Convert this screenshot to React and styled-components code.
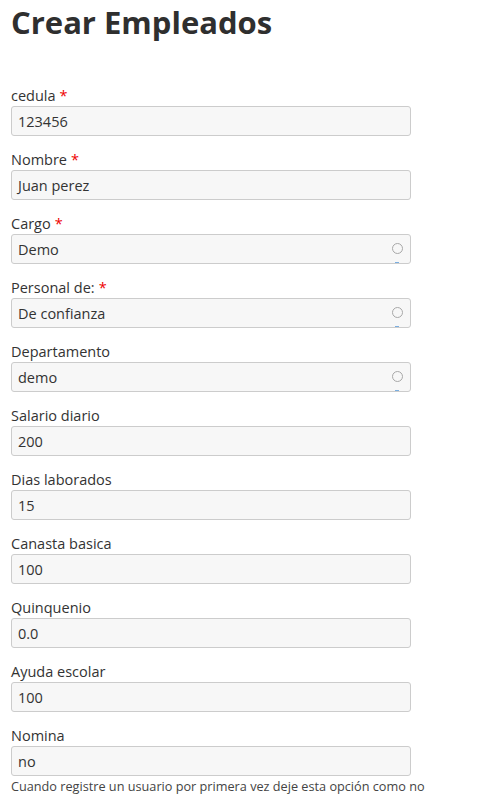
import React from "react";
import styled, { createGlobalStyle } from "styled-components";

const Global = createGlobalStyle`
  html, body { margin: 0; padding: 0; background: #fff; }
  body { font-family: "Open Sans", Lato, sans-serif; color: #333; }
`;

const Page = styled.div`
  padding: 0 11px;
  width: 400px;
`;

const Title = styled.h1`
  margin: 0;
  padding-top: 2px;
  font-size: 31px;
  line-height: 40px;
  font-weight: 700;
  color: #2f2f2f;
  height: 84px;
`;

const Group = styled.div`
  margin-bottom: 14px;
  position: relative;
`;

const Label = styled.label`
  display: block;
  font-size: 14.5px;
  line-height: 20px;
  color: #333;
`;

const Req = styled.span`
  color: #e00;
  margin-left: 4px;
`;

const Field = styled.div`
  box-sizing: border-box;
  height: 30px;
  width: 400px;
  border: 1px solid #ccc;
  border-radius: 3px;
  background: #f7f7f7;
  display: flex;
  align-items: center;
  padding: 0 6px;
  font-size: 14.5px;
  color: #333;
  position: relative;
`;

const Ring = styled.span`
  box-sizing: border-box;
  position: absolute;
  right: 7px;
  top: 8px;
  width: 11px;
  height: 11px;
  border: 1.8px solid #a8a8a8;
  border-radius: 50%;
`;

const Dash = styled.span`
  position: absolute;
  right: 11px;
  bottom: 0;
  width: 4px;
  height: 1px;
  background: #7aaee0;
`;

const Help = styled.div`
  font-size: 12.7px;
  line-height: 16px;
  color: #444;
  margin-top: 2px;
  white-space: nowrap;
`;

const fields = [
  { label: "cedula", req: true, value: "123456" },
  { label: "Nombre", req: true, value: "Juan perez" },
  { label: "Cargo", req: true, value: "Demo", select: true },
  { label: "Personal de:", req: true, value: "De confianza", select: true },
  { label: "Departamento", value: "demo", select: true },
  { label: "Salario diario", value: "200" },
  { label: "Dias laborados", value: "15" },
  { label: "Canasta basica", value: "100" },
  { label: "Quinquenio", value: "0.0" },
  { label: "Ayuda escolar", value: "100" },
  { label: "Nomina", value: "no", help: "Cuando registre un usuario por primera vez deje esta opción como no" },
];

export default function App() {
  return (
    <>
      <Global />
      <Page>
        <Title>Crear Empleados</Title>
        {fields.map((f) => (
          <Group key={f.label}>
            <Label>
              {f.label}
              {f.req && <Req>*</Req>}
            </Label>
            <Field>
              {f.value}
              {f.select && (
                <>
                  <Ring />
                  <Dash />
                </>
              )}
            </Field>
            {f.help && <Help>{f.help}</Help>}
          </Group>
        ))}
      </Page>
    </>
  );
}
